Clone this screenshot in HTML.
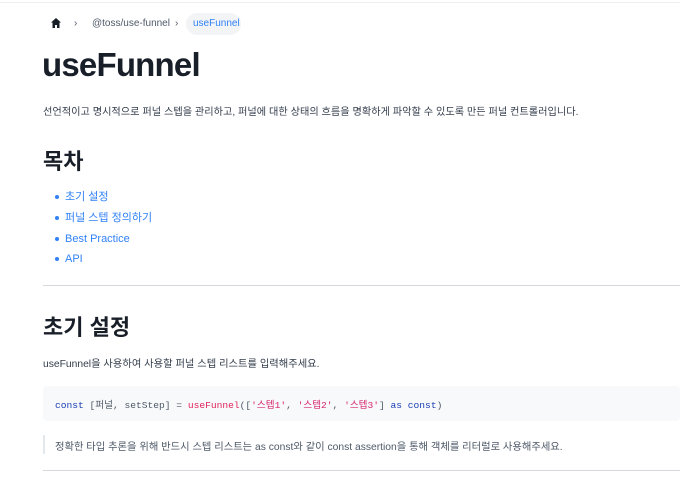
<!DOCTYPE html>
<html><head><meta charset="utf-8"><style>
*{margin:0;padding:0;box-sizing:border-box}
body{width:680px;height:478px;overflow:hidden;background:#fff;font-family:"Liberation Sans","Noto Sans CJK KR",sans-serif;color:#191f28;position:relative}
.a{position:absolute;white-space:nowrap}
.top{position:absolute;left:0;top:0;width:680px;height:3px;border-bottom:1px solid #eee}
.bc{font-size:10px;color:#4e5968}
.pill{position:absolute;left:186px;top:13px;width:55px;height:22px;border-radius:11px;background:#f2f4f6}
ul li{position:absolute;left:65px;font-size:11px;line-height:16px;height:16px;color:#3182f6;list-style:none}
ul li:before{content:"";position:absolute;left:-10px;top:6px;width:4px;height:4px;border-radius:50%;background:#3182f6}
.hr{position:absolute;left:43px;width:637px;height:1px;background:#d5d8dc}
</style></head><body>
<div class="top"></div>
<svg class="a" style="left:50px;top:17px" width="12" height="12" viewBox="0 0 12 12"><path d="M6 1L1 5.5H2.5V11H5V8H7V11H9.5V5.5H11Z" fill="#191f28"/></svg>
<div class="a bc" style="left:74px;top:18px">›</div>
<div class="a bc" style="left:92px;top:18px">@toss/use-funnel</div>
<div class="a bc" style="left:175px;top:18px">›</div>
<div class="pill"></div>
<div class="a bc" style="left:193px;top:18px;color:#3182f6">useFunnel</div>
<div class="a" style="left:42px;top:46px;font-size:33px;font-weight:bold;letter-spacing:-0.8px">useFunnel</div>
<div class="a" style="left:43px;top:103px;font-size:10.2px;color:#333d4b">선언적이고 명시적으로 퍼널 스텝을 관리하고, 퍼널에 대한 상태의 흐름을 명확하게 파악할 수 있도록 만든 퍼널 컨트롤러입니다.</div>
<div class="a" style="left:43px;top:144px;font-size:22px;font-weight:bold">목차</div>
<ul>
<li style="top:189px">초기 설정</li>
<li style="top:210px">퍼널 스텝 정의하기</li>
<li style="top:231px">Best Practice</li>
<li style="top:251px">API</li>
</ul>
<div class="hr" style="top:285px"></div>
<div class="a" style="left:43px;top:310px;font-size:22px;font-weight:bold">초기 설정</div>
<div class="a" style="left:43px;top:355px;font-size:10.3px;color:#333d4b">useFunnel을 사용하여 사용할 퍼널 스텝 리스트를 입력해주세요.</div>
<div class="a" style="left:43px;top:386px;width:637px;height:35px;background:#f8f9fa;border-radius:4px"></div>
<div class="a" style="left:55px;top:397px;font-size:9.6px;font-family:'Liberation Mono','Noto Sans CJK KR',monospace;color:#4e5968"><span style="color:#1b3fb5">const</span> [퍼널, setStep] = <span style="color:#e0245e">useFunnel</span>([<span style="color:#d6246e">'스텝1'</span>, <span style="color:#d6246e">'스텝2'</span>, <span style="color:#d6246e">'스텝3'</span>] <span style="color:#1b3fb5">as const</span>)</div>
<div class="a" style="left:43px;top:435px;width:2px;height:19px;background:#e5e8eb"></div>
<div class="a" style="left:55px;top:438px;font-size:10.3px;color:#4e5968">정확한 타입 추론을 위해 반드시 스텝 리스트는 as const와 같이 const assertion을 통해 객체를 리터럴로 사용해주세요.</div>
<div class="hr" style="top:470px"></div>
</body></html>
